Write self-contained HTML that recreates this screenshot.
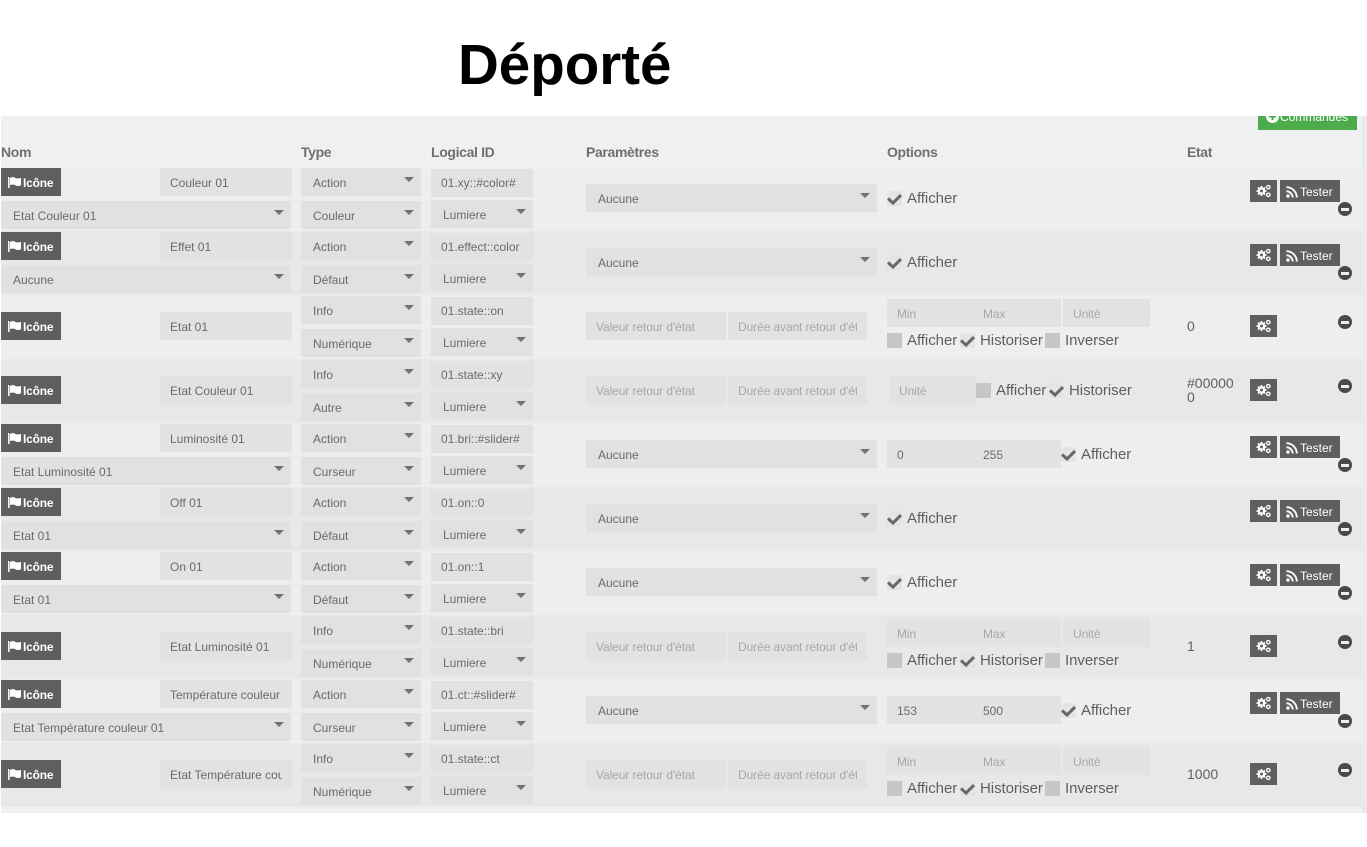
<!DOCTYPE html>
<html lang="fr"><head><meta charset="utf-8"><title>Déporté</title>
<style>
html,body{margin:0;padding:0;background:#fff}
body{width:1367px;height:847px;position:relative;overflow:hidden;font-family:"Liberation Sans",sans-serif;font-size:12px;color:#666}
h1{position:absolute;left:458px;top:32px;margin:0;font-size:56.5px;line-height:66px;font-weight:bold;color:#000}
#p{position:absolute;left:1px;top:116px;width:1361px;height:697px;background:#eef0f2}
#st{position:absolute;left:1362px;top:116px;width:5px;height:697px;background:#e9eaec}
#g{position:absolute;left:1258px;top:116px;width:99px;height:14px;background:#4cac4c;overflow:hidden;color:#fff;font-size:12px;line-height:2px;white-space:nowrap}
#g svg{position:absolute;left:8px;top:-6px}
#g span{position:absolute;left:22px;top:0;line-height:2px}
.h{position:absolute;top:144px;font-size:14px;font-weight:bold;line-height:16px;color:#707070;letter-spacing:-.35px}
.r{position:absolute;left:1px;width:1361px;height:64px;background:#edeeed}
.e{background:#e8e8e9}
.r>*{position:absolute;box-sizing:border-box;white-space:nowrap}
.b{height:28px;line-height:30px;background:#e1e3e2;overflow:hidden;padding-left:10px;border-right:10px solid #e1e3e2;color:#6a6a6a}
.s{height:28px;line-height:31px;background:#e0e2e1;padding-left:12px;color:#6a6a6a}
.b[style*="left:430px"]{line-height:28px}
.s[style*="left:430px"]{line-height:30px}
.s:after{content:"";position:absolute;right:7px;top:9px;border-left:5px solid transparent;border-right:5px solid transparent;border-top:5px solid #757575}
.ph{color:#a6a8a8;letter-spacing:-.1px}
.ic{width:60px;height:28px;left:0;background:#5f5f5f;color:#fff;font-weight:bold;line-height:31px;padding-left:22px;font-size:12px;letter-spacing:-.2px}
.ic svg{position:absolute;left:7px;top:9px}
.ge{left:1249px;width:27px;height:22px;background:#5f5f5f}
.ge svg{position:absolute;left:6px;top:4px}
.te{left:1279px;width:60px;height:22px;background:#5f5f5f;color:#fff;line-height:24px;padding-left:20px;font-size:12px}
.te svg{position:absolute;left:6px;top:6px}
.mi{left:1337px;width:14px;height:14px;border-radius:50%;background:#4a4a4a}
.mi:after{content:"";position:absolute;left:3px;top:5.5px;width:8px;height:3px;background:#eee}
.c{width:15px;height:15px;background:#c6c6c6}
.k{background:#e3e5e4}
.k svg{position:absolute;left:0;top:1px;overflow:visible}
.l{font-size:15px;line-height:18px;color:#5f5f5f;letter-spacing:-.05px}
.v{font-size:14px;line-height:14px;color:#5f5f5f}
</style></head><body>
<svg width="0" height="0" style="position:absolute"><defs>
<symbol id="fl" viewBox="0 0 13 11"><path fill="#fff" d="M0 0h1.500v11H0zM2 1c2-1.200 3.500-1 5.500 0 2 .8 3.500.6 5.500-.3v7.500c-2 1-3.500 1.100-5.500.2-2-.9-3.500-1-5.500 0z"/></symbol>
<symbol id="gr" viewBox="0 0 15 14"><path stroke="#fff" stroke-width="1.700" d="M5.500 2v10M.5 7h10M2 3.500l7 7M9 3.500l-7 7"/><circle cx="5.500" cy="7" r="3.800" fill="#fff"/><circle cx="5.500" cy="7" r="1.500" fill="#5f5f5f"/><circle cx="12.300" cy="3.200" r="1.700" fill="none" stroke="#fff" stroke-width="1.300"/><circle cx="12.300" cy="10.800" r="1.700" fill="none" stroke="#fff" stroke-width="1.300"/></symbol>
<symbol id="rs" viewBox="0 0 12 12"><circle cx="2" cy="10" r="1.700" fill="#fff"/><path fill="none" stroke="#fff" stroke-width="1.800" d="M.5 5.300a6.200 6.200 0 0 1 6.200 6.200M.5 1.200a10.300 10.300 0 0 1 10.300 10.300"/></symbol>
<symbol id="ck" viewBox="0 0 15 13"><path fill="none" stroke="#666" stroke-width="3" d="M1 6.500l5 4.500 8-8"/></symbol>
</defs></svg>

<h1>Déporté</h1>
<div id="p"></div><div id="st"></div>
<div id="g"><svg width="13" height="13" viewBox="0 0 13 13"><circle cx="6.500" cy="6.500" r="6.500" fill="#fff"/><path stroke="#4cac4c" stroke-width="2" d="M6.500 3v7M3 6.500h7"/></svg><span>Commandes</span></div>
<div class="h" style="left:1px">Nom</div>
<div class="h" style="left:301px">Type</div>
<div class="h" style="left:431px">Logical ID</div>
<div class="h" style="left:586px">Paramètres</div>
<div class="h" style="left:887px">Options</div>
<div class="h" style="left:1187px">Etat</div>

<!-- Row 0 -->
<div class="r" style="top:167px">
<div class="ic" style="top:1px"><svg width="13" height="11"><use href="#fl"/></svg>Icône</div>
<div class="b" style="left:159px;top:1px;width:132px">Couleur 01</div>
<div class="s" style="left:0;top:34px;width:290px">Etat Couleur 01</div>
<div class="s" style="left:300px;top:1px;width:120px">Action</div>
<div class="s" style="left:300px;top:34px;width:120px">Couleur</div>
<div class="b" style="left:430px;top:2px;width:102px">01.xy::#color#</div>
<div class="s" style="left:430px;top:33px;width:102px">Lumiere</div>
<div class="s" style="left:585px;top:17px;width:291px">Aucune</div>
<div class="c k" style="left:886px;top:24px"><svg width="15" height="13"><use href="#ck"/></svg></div>
<div class="l" style="left:906px;top:23px">Afficher</div>
<div class="ge" style="top:13px"><svg width="15" height="14"><use href="#gr"/></svg></div>
<div class="te" style="top:13px"><svg width="12" height="12"><use href="#rs"/></svg>Tester</div>
<div class="mi" style="top:35px"></div>
</div>

<!-- Row 1 -->
<div class="r e" style="top:231px">
<div class="ic" style="top:1px"><svg width="13" height="11"><use href="#fl"/></svg>Icône</div>
<div class="b" style="left:159px;top:1px;width:132px">Effet 01</div>
<div class="s" style="left:0;top:34px;width:290px">Aucune</div>
<div class="s" style="left:300px;top:1px;width:120px">Action</div>
<div class="s" style="left:300px;top:34px;width:120px">Défaut</div>
<div class="b" style="left:430px;top:2px;width:102px">01.effect::color</div>
<div class="s" style="left:430px;top:33px;width:102px">Lumiere</div>
<div class="s" style="left:585px;top:17px;width:291px">Aucune</div>
<div class="c k" style="left:886px;top:24px"><svg width="15" height="13"><use href="#ck"/></svg></div>
<div class="l" style="left:906px;top:23px">Afficher</div>
<div class="ge" style="top:13px"><svg width="15" height="14"><use href="#gr"/></svg></div>
<div class="te" style="top:13px"><svg width="12" height="12"><use href="#rs"/></svg>Tester</div>
<div class="mi" style="top:35px"></div>
</div>

<!-- Row 2 -->
<div class="r" style="top:295px">
<div class="ic" style="top:17px"><svg width="13" height="11"><use href="#fl"/></svg>Icône</div>
<div class="b" style="left:159px;top:17px;width:132px">Etat 01</div>
<div class="s" style="left:300px;top:1px;width:120px">Info</div>
<div class="s" style="left:300px;top:34px;width:120px">Numérique</div>
<div class="b" style="left:430px;top:2px;width:102px">01.state::on</div>
<div class="s" style="left:430px;top:33px;width:102px">Lumiere</div>
<div class="b ph" style="left:585px;top:17px;width:140px">Valeur retour d'état</div>
<div class="b ph" style="left:727px;top:17px;width:139px">Durée avant retour d'état</div>
<div class="b ph" style="left:886px;top:4px;width:174px">Min</div>
<div class="ph" style="left:982px;top:4px;line-height:30px">Max</div>
<div class="b ph" style="left:1062px;top:4px;width:87px">Unité</div>
<div class="c" style="left:886px;top:38px"></div>
<div class="l" style="left:906px;top:37px">Afficher</div>
<div class="c k" style="left:959px;top:38px"><svg width="15" height="13"><use href="#ck"/></svg></div>
<div class="l" style="left:979px;top:37px">Historiser</div>
<div class="c" style="left:1044px;top:38px"></div>
<div class="l" style="left:1064px;top:37px">Inverser</div>
<div class="v" style="left:1186px;top:24px">0</div>
<div class="ge" style="top:20px"><svg width="15" height="14"><use href="#gr"/></svg></div>
<div class="mi" style="top:20px"></div>
</div>

<!-- Row 3 -->
<div class="r e" style="top:359px">
<div class="ic" style="top:17px"><svg width="13" height="11"><use href="#fl"/></svg>Icône</div>
<div class="b" style="left:159px;top:17px;width:132px">Etat Couleur 01</div>
<div class="s" style="left:300px;top:1px;width:120px">Info</div>
<div class="s" style="left:300px;top:34px;width:120px">Autre</div>
<div class="b" style="left:430px;top:2px;width:102px">01.state::xy</div>
<div class="s" style="left:430px;top:33px;width:102px">Lumiere</div>
<div class="b ph" style="left:585px;top:17px;width:140px">Valeur retour d'état</div>
<div class="b ph" style="left:727px;top:17px;width:139px">Durée avant retour d'état</div>
<div class="b ph" style="left:888px;top:17px;width:87px">Unité</div>
<div class="c" style="left:975px;top:24px"></div>
<div class="l" style="left:995px;top:23px">Afficher</div>
<div class="c k" style="left:1048px;top:24px"><svg width="15" height="13"><use href="#ck"/></svg></div>
<div class="l" style="left:1068px;top:23px">Historiser</div>
<div class="v" style="left:1186px;top:17px">#00000<br>0</div>
<div class="ge" style="top:20px"><svg width="15" height="14"><use href="#gr"/></svg></div>
<div class="mi" style="top:20px"></div>
</div>

<!-- Row 4 -->
<div class="r" style="top:423px">
<div class="ic" style="top:1px"><svg width="13" height="11"><use href="#fl"/></svg>Icône</div>
<div class="b" style="left:159px;top:1px;width:132px">Luminosité 01</div>
<div class="s" style="left:0;top:34px;width:290px">Etat Luminosité 01</div>
<div class="s" style="left:300px;top:1px;width:120px">Action</div>
<div class="s" style="left:300px;top:34px;width:120px">Curseur</div>
<div class="b" style="left:430px;top:2px;width:102px">01.bri::#slider#</div>
<div class="s" style="left:430px;top:33px;width:102px">Lumiere</div>
<div class="s" style="left:585px;top:17px;width:291px">Aucune</div>
<div class="b" style="left:886px;top:17px;width:174px">0</div>
<div style="left:982px;top:17px;line-height:30px;color:#6a6a6a">255</div>
<div class="c k" style="left:1060px;top:24px"><svg width="15" height="13"><use href="#ck"/></svg></div>
<div class="l" style="left:1080px;top:23px">Afficher</div>
<div class="ge" style="top:13px"><svg width="15" height="14"><use href="#gr"/></svg></div>
<div class="te" style="top:13px"><svg width="12" height="12"><use href="#rs"/></svg>Tester</div>
<div class="mi" style="top:35px"></div>
</div>

<!-- Row 5 -->
<div class="r e" style="top:487px">
<div class="ic" style="top:1px"><svg width="13" height="11"><use href="#fl"/></svg>Icône</div>
<div class="b" style="left:159px;top:1px;width:132px">Off 01</div>
<div class="s" style="left:0;top:34px;width:290px">Etat 01</div>
<div class="s" style="left:300px;top:1px;width:120px">Action</div>
<div class="s" style="left:300px;top:34px;width:120px">Défaut</div>
<div class="b" style="left:430px;top:2px;width:102px">01.on::0</div>
<div class="s" style="left:430px;top:33px;width:102px">Lumiere</div>
<div class="s" style="left:585px;top:17px;width:291px">Aucune</div>
<div class="c k" style="left:886px;top:24px"><svg width="15" height="13"><use href="#ck"/></svg></div>
<div class="l" style="left:906px;top:23px">Afficher</div>
<div class="ge" style="top:13px"><svg width="15" height="14"><use href="#gr"/></svg></div>
<div class="te" style="top:13px"><svg width="12" height="12"><use href="#rs"/></svg>Tester</div>
<div class="mi" style="top:35px"></div>
</div>

<!-- Row 6 -->
<div class="r" style="top:551px">
<div class="ic" style="top:1px"><svg width="13" height="11"><use href="#fl"/></svg>Icône</div>
<div class="b" style="left:159px;top:1px;width:132px">On 01</div>
<div class="s" style="left:0;top:34px;width:290px">Etat 01</div>
<div class="s" style="left:300px;top:1px;width:120px">Action</div>
<div class="s" style="left:300px;top:34px;width:120px">Défaut</div>
<div class="b" style="left:430px;top:2px;width:102px">01.on::1</div>
<div class="s" style="left:430px;top:33px;width:102px">Lumiere</div>
<div class="s" style="left:585px;top:17px;width:291px">Aucune</div>
<div class="c k" style="left:886px;top:24px"><svg width="15" height="13"><use href="#ck"/></svg></div>
<div class="l" style="left:906px;top:23px">Afficher</div>
<div class="ge" style="top:13px"><svg width="15" height="14"><use href="#gr"/></svg></div>
<div class="te" style="top:13px"><svg width="12" height="12"><use href="#rs"/></svg>Tester</div>
<div class="mi" style="top:35px"></div>
</div>

<!-- Row 7 -->
<div class="r e" style="top:615px">
<div class="ic" style="top:17px"><svg width="13" height="11"><use href="#fl"/></svg>Icône</div>
<div class="b" style="left:159px;top:17px;width:132px">Etat Luminosité 01</div>
<div class="s" style="left:300px;top:1px;width:120px">Info</div>
<div class="s" style="left:300px;top:34px;width:120px">Numérique</div>
<div class="b" style="left:430px;top:2px;width:102px">01.state::bri</div>
<div class="s" style="left:430px;top:33px;width:102px">Lumiere</div>
<div class="b ph" style="left:585px;top:17px;width:140px">Valeur retour d'état</div>
<div class="b ph" style="left:727px;top:17px;width:139px">Durée avant retour d'état</div>
<div class="b ph" style="left:886px;top:4px;width:174px">Min</div>
<div class="ph" style="left:982px;top:4px;line-height:30px">Max</div>
<div class="b ph" style="left:1062px;top:4px;width:87px">Unité</div>
<div class="c" style="left:886px;top:38px"></div>
<div class="l" style="left:906px;top:37px">Afficher</div>
<div class="c k" style="left:959px;top:38px"><svg width="15" height="13"><use href="#ck"/></svg></div>
<div class="l" style="left:979px;top:37px">Historiser</div>
<div class="c" style="left:1044px;top:38px"></div>
<div class="l" style="left:1064px;top:37px">Inverser</div>
<div class="v" style="left:1186px;top:24px">1</div>
<div class="ge" style="top:20px"><svg width="15" height="14"><use href="#gr"/></svg></div>
<div class="mi" style="top:20px"></div>
</div>

<!-- Row 8 -->
<div class="r" style="top:679px">
<div class="ic" style="top:1px"><svg width="13" height="11"><use href="#fl"/></svg>Icône</div>
<div class="b" style="left:159px;top:1px;width:132px">Température couleur 01</div>
<div class="s" style="left:0;top:34px;width:290px">Etat Température couleur 01</div>
<div class="s" style="left:300px;top:1px;width:120px">Action</div>
<div class="s" style="left:300px;top:34px;width:120px">Curseur</div>
<div class="b" style="left:430px;top:2px;width:102px">01.ct::#slider#</div>
<div class="s" style="left:430px;top:33px;width:102px">Lumiere</div>
<div class="s" style="left:585px;top:17px;width:291px">Aucune</div>
<div class="b" style="left:886px;top:17px;width:174px">153</div>
<div style="left:982px;top:17px;line-height:30px;color:#6a6a6a">500</div>
<div class="c k" style="left:1060px;top:24px"><svg width="15" height="13"><use href="#ck"/></svg></div>
<div class="l" style="left:1080px;top:23px">Afficher</div>
<div class="ge" style="top:13px"><svg width="15" height="14"><use href="#gr"/></svg></div>
<div class="te" style="top:13px"><svg width="12" height="12"><use href="#rs"/></svg>Tester</div>
<div class="mi" style="top:35px"></div>
</div>

<!-- Row 9 -->
<div class="r e" style="top:743px">
<div class="ic" style="top:17px"><svg width="13" height="11"><use href="#fl"/></svg>Icône</div>
<div class="b" style="left:159px;top:17px;width:132px">Etat Température couleur 01</div>
<div class="s" style="left:300px;top:1px;width:120px">Info</div>
<div class="s" style="left:300px;top:34px;width:120px">Numérique</div>
<div class="b" style="left:430px;top:2px;width:102px">01.state::ct</div>
<div class="s" style="left:430px;top:33px;width:102px">Lumiere</div>
<div class="b ph" style="left:585px;top:17px;width:140px">Valeur retour d'état</div>
<div class="b ph" style="left:727px;top:17px;width:139px">Durée avant retour d'état</div>
<div class="b ph" style="left:886px;top:4px;width:174px">Min</div>
<div class="ph" style="left:982px;top:4px;line-height:30px">Max</div>
<div class="b ph" style="left:1062px;top:4px;width:87px">Unité</div>
<div class="c" style="left:886px;top:38px"></div>
<div class="l" style="left:906px;top:37px">Afficher</div>
<div class="c k" style="left:959px;top:38px"><svg width="15" height="13"><use href="#ck"/></svg></div>
<div class="l" style="left:979px;top:37px">Historiser</div>
<div class="c" style="left:1044px;top:38px"></div>
<div class="l" style="left:1064px;top:37px">Inverser</div>
<div class="v" style="left:1186px;top:24px">1000</div>
<div class="ge" style="top:20px"><svg width="15" height="14"><use href="#gr"/></svg></div>
<div class="mi" style="top:20px"></div>
</div>
</body></html>
